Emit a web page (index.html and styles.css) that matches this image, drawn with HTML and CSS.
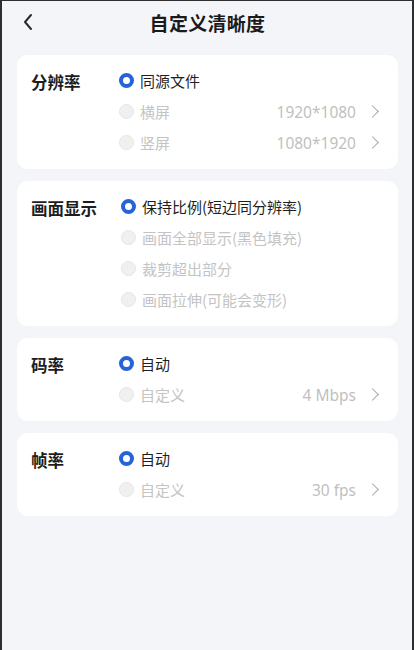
FILE: index.html
```html
<!DOCTYPE html>
<html lang="zh">
<head>
<meta charset="utf-8">
<link rel="stylesheet" href="styles.css">
</head>
<body>
<div class="screen">
  <header class="nav">
    <svg class="back" width="12" height="18" viewBox="0 0 12 18"><path d="M9 2 L3 9 L9 16" fill="none" stroke="#2a2a2a" stroke-width="2" stroke-linecap="round" stroke-linejoin="round"/></svg>
    <h1 class="title">自定义清晰度</h1>
  </header>

  <section class="card">
    <div class="label">分辨率</div>
    <div class="options">
      <div class="opt"><span class="radio on"></span><span class="text">同源文件</span></div>
      <div class="opt off"><span class="radio"></span><span class="text">横屏</span><span class="value">1920*1080</span><span class="chev"></span></div>
      <div class="opt off"><span class="radio"></span><span class="text">竖屏</span><span class="value">1080*1920</span><span class="chev"></span></div>
    </div>
  </section>

  <section class="card wide">
    <div class="label">画面显示</div>
    <div class="options">
      <div class="opt"><span class="radio on"></span><span class="text">保持比例(短边同分辨率)</span></div>
      <div class="opt off"><span class="radio"></span><span class="text">画面全部显示(黑色填充)</span></div>
      <div class="opt off"><span class="radio"></span><span class="text">裁剪超出部分</span></div>
      <div class="opt off"><span class="radio"></span><span class="text">画面拉伸(可能会变形)</span></div>
    </div>
  </section>

  <section class="card">
    <div class="label">码率</div>
    <div class="options">
      <div class="opt"><span class="radio on"></span><span class="text">自动</span></div>
      <div class="opt off"><span class="radio"></span><span class="text">自定义</span><span class="value">4 Mbps</span><span class="chev"></span></div>
    </div>
  </section>

  <section class="card">
    <div class="label">帧率</div>
    <div class="options">
      <div class="opt"><span class="radio on"></span><span class="text">自动</span></div>
      <div class="opt off"><span class="radio"></span><span class="text">自定义</span><span class="value">30 fps</span><span class="chev"></span></div>
    </div>
  </section>
</div>
</body>
</html>
```
FILE: styles.css
```css
* { box-sizing: border-box; }
html, body { margin: 0; padding: 0; }
body {
  width: 414px;
  height: 650px;
  background: #f4f5f9;
  font-family: "Noto Sans CJK SC", "Noto Sans", sans-serif;
  overflow: hidden;
}
.screen {
  height: 650px;
  border-left: 2px solid #2e2e30;
  border-right: 2px solid #2e2e30;
  border-top: 1px solid #2e2e30;
  padding: 0 14px 0 15px;
  background: #f4f5f9;
}
.nav {
  position: relative;
  height: 42px;
  display: flex;
  align-items: center;
  justify-content: center;
}
.back {
  position: absolute;
  left: 5px;
  top: 12px;
}
.title {
  margin: 0;
  font-size: 19px;
  font-weight: 700;
  color: #1b1b1b;
  letter-spacing: 0.3px;
}
.card {
  background: #fff;
  border-radius: 11px;
  margin-top: 12px;
  padding: 10px 18px 11px 14px;
  display: flex;
}
.label {
  width: 88px;
  flex: none;
  font-size: 16.5px;
  font-weight: 700;
  color: #1d1d1d;
  line-height: 31px;
  padding-top: 2px;
}
.card.wide .label { width: 90px; }
.options { flex: 1; }
.opt {
  height: 31px;
  display: flex;
  align-items: center;
  font-size: 15px;
  color: #1f1f1f;
}
.radio {
  width: 15px;
  height: 15px;
  border-radius: 50%;
  flex: none;
  margin-right: 6px;
  background: #f0f0f0;
  border: 1px solid #e6e6e6;
}
.radio.on {
  background: #fff;
  border: 4.5px solid #2563d8;
}
.opt.off .text { color: #c4c4c4; }
.value {
  margin-left: auto;
  color: #bfbfbf;
  font-family: "Noto Sans", sans-serif;
  font-size: 15.5px;
}
.chev {
  width: 9px;
  height: 9px;
  border-top: 1.6px solid #a6a6a6;
  border-right: 1.6px solid #a6a6a6;
  transform: rotate(45deg);
  margin-left: 12px;
  margin-right: 3px;
}
```
